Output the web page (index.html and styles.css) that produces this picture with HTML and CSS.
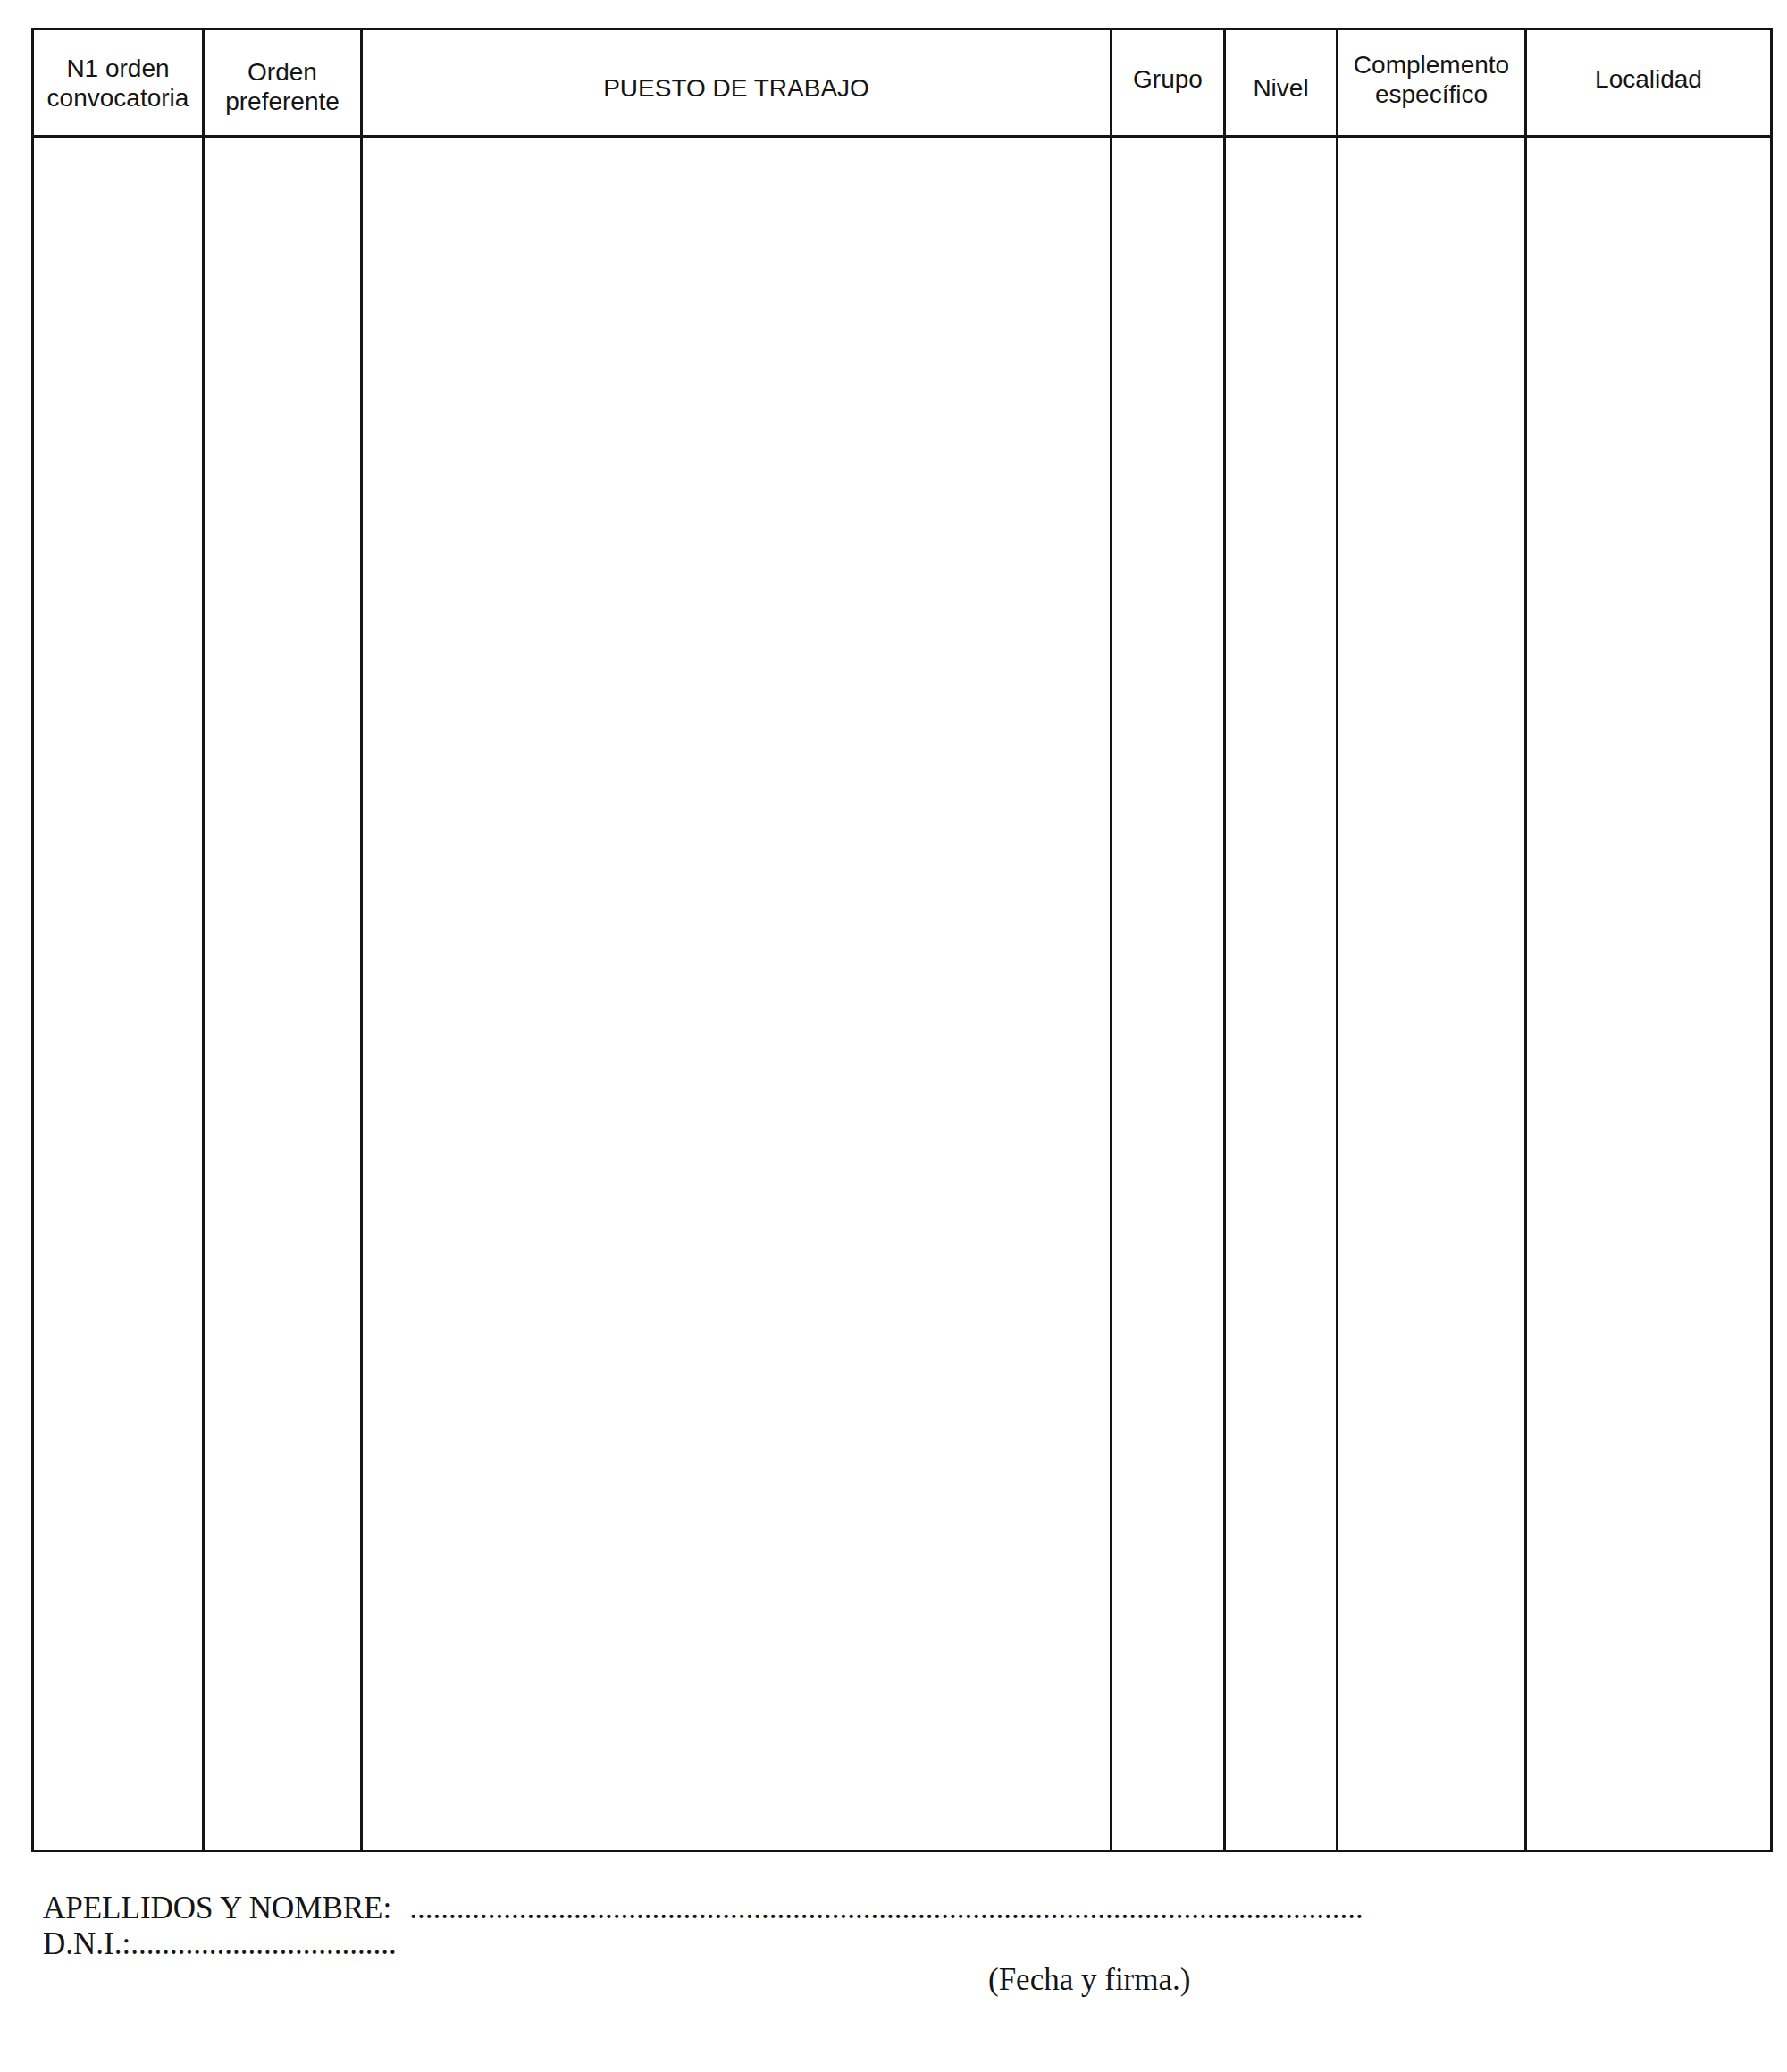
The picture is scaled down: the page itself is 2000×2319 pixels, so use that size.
FILE: index.html
```html
<!DOCTYPE html>
<html lang="es">
<head>
<meta charset="utf-8">
<title>Solicitud de puestos</title>
<link rel="stylesheet" href="styles.css">
</head>
<body>
<div class="page">
  <div class="grid">
    <div class="th">N1 orden<br>convocatoria</div>
    <div class="th down-s">Orden<br>preferente</div>
    <div class="th down">PUESTO DE TRABAJO</div>
    <div class="th up">Grupo</div>
    <div class="th down">Nivel</div>
    <div class="th up">Complemento<br>específico</div>
    <div class="th up">Localidad</div>
    <div class="td"></div>
    <div class="td"></div>
    <div class="td"></div>
    <div class="td"></div>
    <div class="td"></div>
    <div class="td"></div>
    <div class="td"></div>
  </div>
  <div class="footer">
    <div class="line"><span class="label">APELLIDOS Y NOMBRE:</span><span class="dots long">..........................................................................................................................</span></div>
    <div class="line"><span class="label">D.N.I.:</span><span class="dots">..................................</span></div>
    <div class="line sign">(Fecha y firma.)</div>
  </div>
</div>
</body>
</html>
```

FILE: styles.css
```css
html, body {
  margin: 0;
  padding: 0;
  background: #ffffff;
}

.page {
  padding: 31px 0 0 35px;
  width: 1965px;
  height: 2288px;
  box-sizing: content-box;
}

.grid {
  display: grid;
  grid-template-columns: 188px 174px 836px 124px 123px 208px 272px;
  grid-template-rows: 117px 1916px;
  gap: 3px;
  padding: 3px;
  background: #141414;
  width: max-content;
}

.th, .td {
  background: #ffffff;
}

.th {
  display: flex;
  align-items: center;
  justify-content: center;
  text-align: center;
  font-family: "Liberation Sans", Arial, sans-serif;
  font-size: 28px;
  line-height: 33px;
  color: #151515;
  box-sizing: border-box;
}

.th.down { padding-top: 12px; }
.th.down-s { padding-top: 8px; }
.th.up { padding-bottom: 8px; }

.footer {
  margin: 43px 0 0 13px;
  font-family: "Liberation Serif", "Times New Roman", serif;
  font-size: 35px;
  line-height: 40px;
  color: #151515;
}

.line {
  display: flex;
  white-space: nowrap;
}

.dots {
  display: block;
  white-space: nowrap;
}

.dots.long { margin-left: 20px; }

.sign {
  padding-left: 1058px;
}
```
